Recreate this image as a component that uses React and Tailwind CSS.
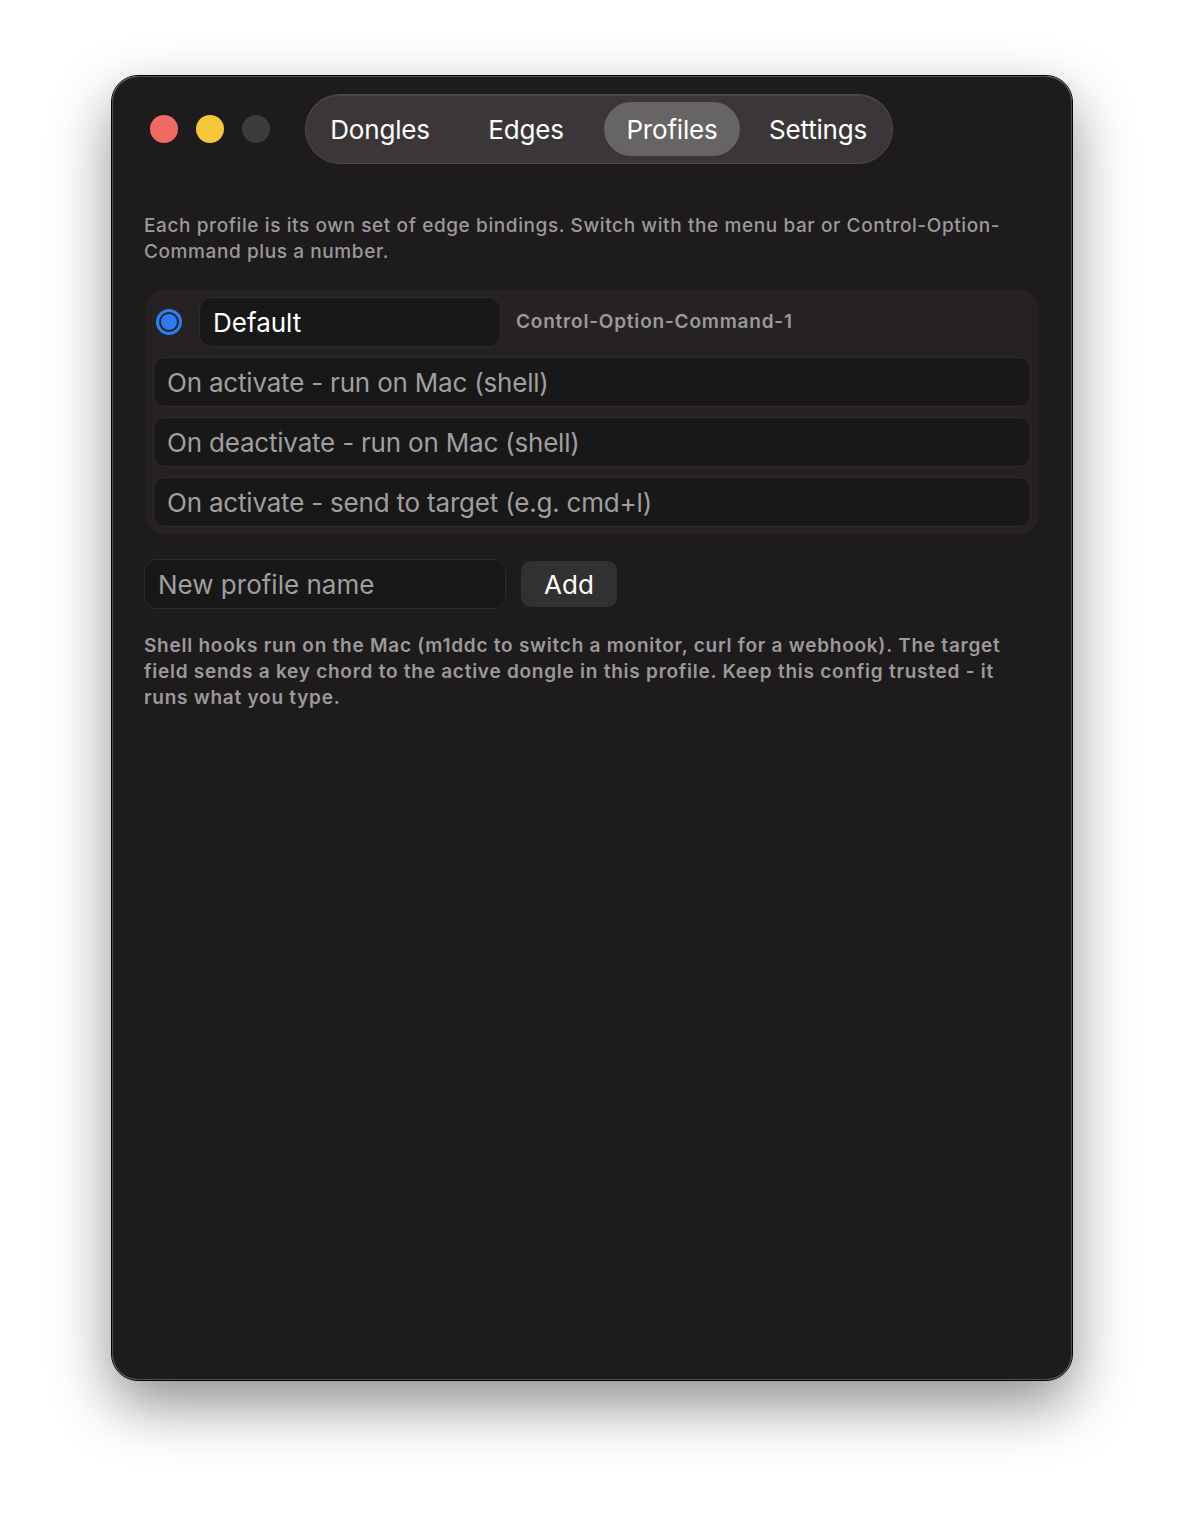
import { useState } from 'react';

const tabs = ['Dongles', 'Edges', 'Profiles', 'Settings'];

const hooks = [
  'On activate - run on Mac (shell)',
  'On deactivate - run on Mac (shell)',
  'On activate - send to target (e.g. cmd+l)',
];

const App = () => {
  const [active, setActive] = useState('Profiles');
  return (
    <div
      className="min-h-[1528px] w-[1184px] bg-white pt-[76px] pl-[112px]"
      style={{ fontFamily: 'Inter, "Noto Sans", sans-serif' }}
    >
      <div className="w-[960px] h-[1304px] rounded-[26px] bg-[#1e1b1c] border border-[#555253] outline outline-1 outline-black shadow-[0_24px_60px_rgba(0,0,0,0.45)] pl-[31px] pr-8 pt-4">
        {/* title bar */}
        <div className="flex items-center h-[72px]">
          <div className="flex gap-[18px] pl-[6px]">
            <span className="w-7 h-7 rounded-full bg-[#ef6a63]" />
            <span className="w-7 h-7 rounded-full bg-[#f4c73b]" />
            <span className="w-7 h-7 rounded-full bg-[#3e3b3c]" />
          </div>
          <nav className="ml-[35px] flex items-center h-[70px] px-[1px] rounded-full bg-[#3b3738] border border-[#4d494a] shadow-[inset_0_1px_0_rgba(255,255,255,0.08)]">
            {tabs.map(t => (
              <button
                key={t}
                onClick={() => setActive(t)}
                className="w-[146px] h-full flex items-center justify-center"
              >
                <span
                  className={
                    'w-[136px] h-[54px] rounded-full flex items-center justify-center text-[26px] text-white tracking-[-0.2px] ' +
                    (active === t ? 'bg-[#676465]' : '')
                  }
                >
                  {t}
                </span>
              </button>
            ))}
          </nav>
        </div>

        <p className="mt-[48px] text-[19px] leading-[26px] text-[#9c999a] font-medium tracking-[0.6px] pr-2">
          Each profile is its own set of edge bindings. Switch with the menu bar or Control-Option-Command plus a number.
        </p>

        <div className="mt-[24px] ml-px rounded-[20px] bg-[#262223] p-2 flex flex-col gap-[10px]">
          <div className="flex items-center">
            <span className="ml-[3px] w-[26px] h-[26px] rounded-full border-[3px] border-[#2f7bf6] flex items-center justify-center">
              <span className="w-[16px] h-[16px] rounded-full bg-[#2f7bf6]" />
            </span>
            <div className="ml-[17px] w-[302px] h-[50px] rounded-[12px] bg-[#181818] border border-[#302c2d] flex items-center px-[13px] text-[26px] text-white">
              Default
            </div>
            <span className="ml-[15px] text-[19px] font-semibold tracking-[0.8px] text-[#9c999a]">Control-Option-Command-1</span>
          </div>
          {hooks.map(h => (
            <div
              key={h}
              className="h-[50px] rounded-[12px] bg-[#181818] border border-[#302c2d] flex items-center px-[13px] text-[26px] tracking-[-0.2px] text-[#a19e9f]"
            >
              {h}
            </div>
          ))}
        </div>

        <div className="mt-[24px] flex items-center gap-[15px]">
          <div className="w-[362px] h-[50px] rounded-[12px] bg-[#181818] border border-[#302c2d] flex items-center px-[13px] text-[26px] text-[#a19e9f]">
            New profile name
          </div>
          <button className="h-[46px] w-[96px] rounded-[10px] bg-[#333031] text-[26px] text-white">Add</button>
        </div>

        <p className="mt-[24px] text-[19px] leading-[26px] text-[#9c999a] font-semibold tracking-[0.75px] pr-2">
          Shell hooks run on the Mac (m1ddc to switch a monitor, curl for a webhook). The target field sends a key chord to the active dongle in this profile. Keep this config trusted - it runs what you type.
        </p>
      </div>
    </div>
  );
};

export default App;
